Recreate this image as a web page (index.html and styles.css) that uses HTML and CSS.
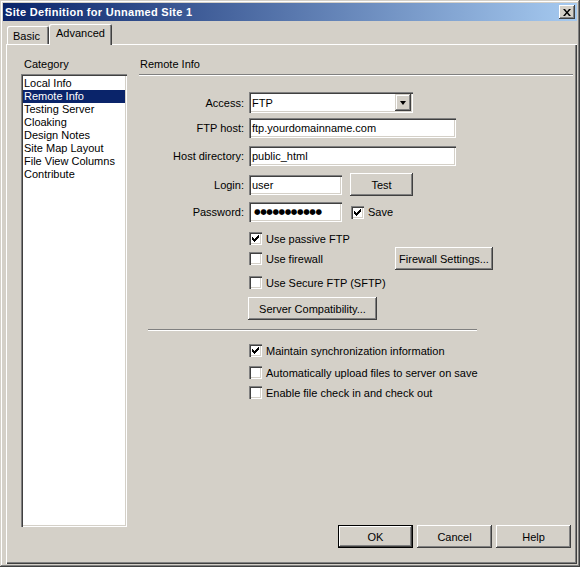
FILE: index.html
```html
<!DOCTYPE html>
<html lang="en">
<head>
    <meta charset="UTF-8">
    <title>Site Definition for Unnamed Site 1</title>
    <link rel="stylesheet" href="styles.css">
</head>
<body>

<div class="window">
    <div class="titlebar">
        <span class="title">Site Definition for Unnamed Site 1</span>
        <div class="close-btn">
            <svg width="8" height="7" viewBox="0 0 8 7"><path d="M0 0h2l2 2.5 2-2.5h2L5 3.5 8 7H6L4 4.5 2 7H0l3-3.5z" fill="#000"/></svg>
        </div>
    </div>

    <div class="tabs">
        <div class="tab tab-basic">Basic</div>
        <div class="tab tab-active">Advanced</div>
    </div>

    <div class="panel">
        <div class="sidebar">
            <div class="sidebar-label">Category</div>
            <ul class="listbox">
                <li>Local Info</li>
                <li class="selected">Remote Info</li>
                <li>Testing Server</li>
                <li>Cloaking</li>
                <li>Design Notes</li>
                <li>Site Map Layout</li>
                <li>File View Columns</li>
                <li>Contribute</li>
            </ul>
        </div>

        <div class="main">
            <div class="section-title">Remote Info</div>

            <div class="field field-access">
                <span class="field-label">Access:</span>
                <div class="combo">
                    <span class="combo-value">FTP</span>
                    <span class="combo-arrow"><span class="triangle"></span></span>
                </div>
            </div>
            <div class="field field-host">
                <span class="field-label">FTP host:</span>
                <div class="textbox wide">ftp.yourdomainname.com</div>
            </div>
            <div class="field field-dir">
                <span class="field-label">Host directory:</span>
                <div class="textbox wide">public_html</div>
            </div>
            <div class="field field-login">
                <span class="field-label">Login:</span>
                <div class="textbox short">user</div>
                <button class="btn btn-test">Test</button>
            </div>
            <div class="field field-password">
                <span class="field-label">Password:</span>
                <div class="textbox short password">●●●●●●●●●●●</div>
                <label class="check check-save">
                    <span class="checkbox checked"></span>Save
                </label>
            </div>

            <label class="check option opt-passive">
                <span class="checkbox checked"></span>Use passive FTP
            </label>
            <div class="option opt-firewall">
                <label class="check">
                    <span class="checkbox"></span>Use firewall
                </label>
                <button class="btn btn-firewall">Firewall Settings...</button>
            </div>
            <label class="check option opt-secure">
                <span class="checkbox"></span>Use Secure FTP (SFTP)
            </label>
            <button class="btn btn-compat">Server Compatibility...</button>

            <div class="divider"></div>

            <label class="check option opt-sync">
                <span class="checkbox checked"></span>Maintain synchronization information
            </label>
            <label class="check option opt-upload">
                <span class="checkbox"></span>Automatically upload files to server on save
            </label>
            <label class="check option opt-checkin">
                <span class="checkbox"></span>Enable file check in and check out
            </label>

            <div class="dialog-buttons">
                <button class="btn btn-default">OK</button>
                <button class="btn">Cancel</button>
                <button class="btn">Help</button>
            </div>
        </div>
    </div>
</div>

</body>
</html>
```

FILE: styles.css
```css
* {
    margin: 0;
    padding: 0;
    box-sizing: border-box;
}

body {
    font-family: "Liberation Sans", Arial, sans-serif;
    font-size: 11px;
    color: #000;
    background-color: #d4d0c8;
}

/* window frame */
.window {
    width: 580px;
    height: 567px;
    padding: 3px;
    display: flex;
    flex-direction: column;
    background-color: #d4d0c8;
    box-shadow: inset -1px -1px #404040, inset 1px 1px #d4d0c8, inset -2px -2px #808080, inset 2px 2px #fff;
}

.titlebar {
    height: 18px;
    flex: none;
    display: flex;
    align-items: center;
    justify-content: space-between;
    padding: 0 2px;
    background: linear-gradient(to right, #0a246a, #a6caf0);
}

.title {
    color: #fff;
    font-weight: bold;
    letter-spacing: 0.3px;
}

.close-btn {
    width: 16px;
    height: 14px;
    display: flex;
    align-items: center;
    justify-content: center;
    background-color: #d4d0c8;
    box-shadow: inset -1px -1px #404040, inset 1px 1px #fff, inset -2px -2px #808080;
}

/* tabs */
.tabs {
    flex: none;
    display: flex;
    align-items: flex-end;
    height: 20px;
    margin-top: 3px;
    padding-left: 4px;
    position: relative;
    z-index: 1;
}

.tab {
    background-color: #d4d0c8;
    line-height: 13px;
    border-radius: 2px 2px 0 0;
    box-shadow: inset 1px 1px #fff, inset -1px 0 #404040, inset -2px 0 #808080;
}

.tab-basic {
    width: 42px;
    height: 18px;
    padding: 4px 0 0 6px;
}

.tab-active {
    width: 63px;
    height: 21px;
    margin-bottom: -1px;
    padding: 3px 0 0 7px;
}

/* panel */
.panel {
    flex: 1;
    display: flex;
    margin-left: 3px;
    padding: 14px 4px 0 15px;
    box-shadow: inset 1px 1px #fff, inset -1px -1px #404040, inset -2px -2px #808080;
}

.sidebar {
    width: 106px;
    margin-right: 12px;
    flex: none;
}

.sidebar-label {
    height: 16px;
    line-height: 13px;
    padding-left: 3px;
}

.listbox {
    list-style: none;
    height: 453px;
    padding: 3px 2px 2px;
    background-color: #fff;
    box-shadow: inset 1px 1px #808080, inset 2px 2px #404040, inset -1px -1px #fff, inset -2px -2px #d4d0c8;
}

.listbox li {
    line-height: 13px;
    padding-left: 1px;
    white-space: nowrap;
}

.listbox li.selected {
    background-color: #0a246a;
    color: #fff;
}

.main {
    flex: 1;
    height: 490px;
    display: flex;
    flex-direction: column;
}

.section-title {
    height: 17px;
    line-height: 13px;
    padding-left: 1px;
    border-bottom: 1px solid #808080;
    box-shadow: 0 1px #fff;
}

/* form fields */
.field {
    display: flex;
    align-items: center;
}

.field-label {
    width: 105px;
    margin-right: 5px;
    text-align: right;
    white-space: nowrap;
}

.field-access { margin-top: 17px; }
.field-host { margin-top: 5px; }
.field-dir { margin-top: 8px; }
.field-login { margin-top: 7px; }
.field-password { margin-top: 6px; }

.combo {
    width: 164px;
    height: 21px;
    padding: 2px;
    display: flex;
    align-items: center;
    justify-content: space-between;
    background-color: #fff;
    box-shadow: inset 1px 1px #808080, inset 2px 2px #404040, inset -1px -1px #fff, inset -2px -2px #d4d0c8;
}

.combo-value {
    padding-left: 1px;
}

.combo-arrow {
    width: 16px;
    height: 17px;
    display: flex;
    align-items: center;
    justify-content: center;
    background-color: #d4d0c8;
    box-shadow: inset -1px -1px #404040, inset 1px 1px #d4d0c8, inset -2px -2px #808080, inset 2px 2px #fff;
}

.triangle {
    width: 0;
    height: 0;
    border-left: 3.5px solid transparent;
    border-right: 3.5px solid transparent;
    border-top: 4px solid #000;
}

.textbox {
    height: 20px;
    padding: 2px 3px;
    line-height: 16px;
    white-space: nowrap;
    overflow: hidden;
    background-color: #fff;
    box-shadow: inset 1px 1px #808080, inset 2px 2px #404040, inset -1px -1px #fff, inset -2px -2px #d4d0c8;
}

.textbox.wide { width: 207px; }
.textbox.short { width: 93px; }

.textbox.password {
    font-family: "DejaVu Sans", sans-serif;
    font-size: 7.5px;
    letter-spacing: -0.4px;
    padding-left: 5px;
}

/* buttons */
.btn {
    height: 23px;
    border: 0;
    font: inherit;
    color: #000;
    background-color: #d4d0c8;
    box-shadow: inset -1px -1px #404040, inset 1px 1px #fff, inset -2px -2px #808080, inset 2px 2px #d4d0c8;
}

.btn-test {
    width: 63px;
    margin-left: 8px;
}

.btn-firewall {
    width: 98px;
    margin-left: auto;
    flex: none;
}

.btn-compat {
    width: 129px;
    margin: 8px 0 0 109px;
    align-self: flex-start;
}

.btn-default {
    box-shadow: inset 0 0 0 1px #000, inset -2px -2px #404040, inset 2px 2px #fff, inset -3px -3px #808080;
}

/* checkboxes */
.check {
    display: flex;
    align-items: center;
    gap: 4px;
    height: 13px;
    white-space: nowrap;
}

.checkbox {
    width: 13px;
    height: 13px;
    flex: none;
    background-color: #fff;
    box-shadow: inset 1px 1px #808080, inset 2px 2px #404040, inset -1px -1px #fff, inset -2px -2px #d4d0c8;
}

.checkbox.checked {
    background-image: url("data:image/svg+xml,%3Csvg xmlns='http://www.w3.org/2000/svg' width='13' height='13'%3E%3Cpath d='M9 3h1v1h-1zM8 4h2v1h-2zM3 5h1v1h-1zM7 5h3v1h-3zM3 6h2v1h-2zM6 6h3v1h-3zM3 7h5v1h-5zM4 8h3v1h-3zM5 9h1v1h-1z' fill='%23000'/%3E%3C/svg%3E");
}

.check-save {
    margin-left: 9px;
}

.option {
    margin-left: 110px;
}

.opt-passive { margin-top: 10px; }

.opt-firewall {
    display: flex;
    align-items: center;
    height: 13px;
    width: 244px;
    margin-top: 7px;
}

.opt-secure { margin-top: 11px; }

.divider {
    width: 329px;
    margin: 9px 0 0 9px;
    border-top: 1px solid #808080;
    border-bottom: 1px solid #fff;
}

.opt-sync { margin-top: 13px; }
.opt-upload { margin-top: 9px; }
.opt-checkin { margin-top: 7px; }

.dialog-buttons {
    margin-top: auto;
    display: flex;
    justify-content: flex-end;
    gap: 4px;
    padding-right: 2px;
}

.dialog-buttons .btn {
    width: 75px;
}
```
